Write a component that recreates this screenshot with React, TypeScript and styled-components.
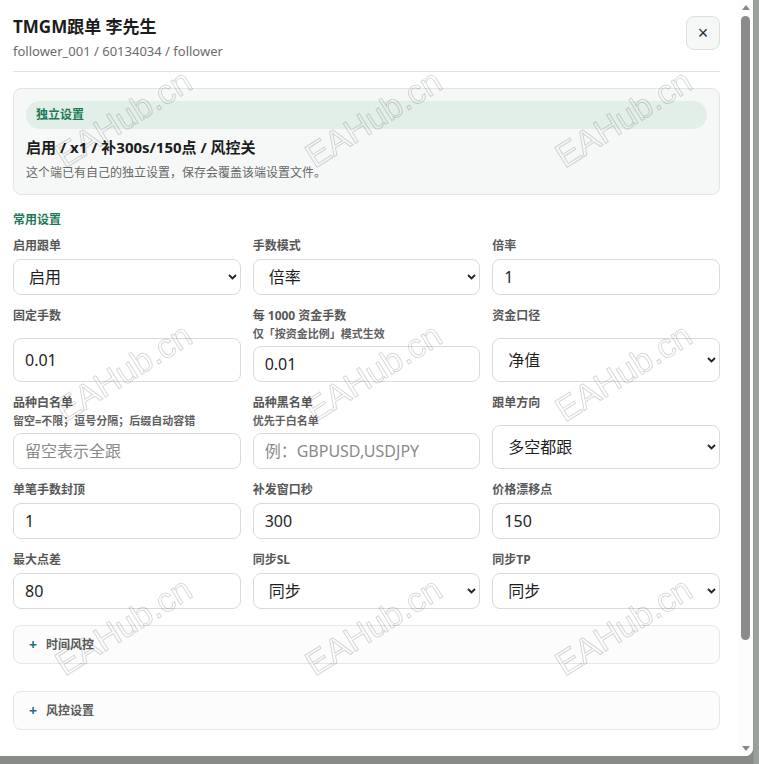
import styled, { createGlobalStyle } from 'styled-components';

const GlobalStyle = createGlobalStyle`
  html, body {
    margin: 0;
    padding: 0;
  }
  body {
    background: #878c88;
    font-family: 'Noto Sans', 'Noto Sans CJK SC', sans-serif;
    color: #1f1f1f;
  }
`;

const Page = styled.div`
  width: 759px;
  height: 764px;
  overflow: hidden;
  background: linear-gradient(90deg, #878c88 753px, #9aa09c 754px);
`;

const Modal = styled.div`
  width: 753px;
  height: 756px;
  display: flex;
  background: #fff;
  border-radius: 0 0 8px 0;
  overflow: hidden;
`;

const Body = styled.div`
  flex: 1;
  min-width: 0;
  overflow: hidden;
  padding: 16px 18px 0 13px;
`;

/* modal's own scroll rail */
const Rail = styled.div`
  width: 15px;
  display: flex;
  flex-direction: column;
  background: #fdfdfd;
`;

const RailArrow = styled.div`
  height: 15px;
  display: flex;
  align-items: center;
  justify-content: center;
`;

const RailTrack = styled.div`
  flex: 1;
  padding: 1px 3px 0 3px;
`;

const RailThumb = styled.div`
  height: 624px;
  border-radius: 5px;
  background: #8b8b8b;
`;

const Header = styled.header`
  display: flex;
  justify-content: space-between;
  align-items: flex-start;
  padding-bottom: 11px;
  border-bottom: 1px solid #e1e4e2;
`;

const Title = styled.h2`
  margin: 0;
  font-size: 17px;
  line-height: 22px;
  font-weight: 700;
  color: #1c1c1c;
`;

const Subtitle = styled.div`
  margin-top: 4px;
  font-size: 13px;
  line-height: 18px;
  color: #6b6b6b;
`;

const CloseButton = styled.button`
  width: 34px;
  height: 34px;
  padding: 0;
  border: 1px solid #d9e1dc;
  border-radius: 8px;
  background: #f5f8f6;
  color: #1d2a38;
  font-size: 18px;
  line-height: 1;
  font-family: 'Liberation Sans', sans-serif;
  cursor: pointer;
`;

const InfoCard = styled.section`
  margin-top: 16px;
  padding: 12px;
  border: 1px solid #e1e7e3;
  border-radius: 8px;
  background: #f6f8f7;
`;

const Pill = styled.div`
  height: 28px;
  padding: 0 10px;
  border-radius: 14px;
  background: #e2efe8;
  color: #1d7856;
  font-size: 12px;
  line-height: 28px;
  font-weight: 700;
`;

const Summary = styled.div`
  margin-top: 7px;
  font-size: 15px;
  line-height: 22px;
  font-weight: 700;
  color: #1c1c1c;
`;

const Note = styled.div`
  margin-top: 6px;
  font-size: 12px;
  line-height: 18px;
  color: #676767;
`;

const GroupTitle = styled.div`
  margin-top: 17px;
  font-size: 12px;
  line-height: 16px;
  font-weight: 700;
  color: #1d7856;
`;

const Grid = styled.div`
  margin-top: 10px;
  display: grid;
  grid-template-columns: repeat(3, 1fr);
  column-gap: 12px;
  row-gap: 13px;
`;

const Field = styled.div`
  display: grid;
  row-gap: 5px;
`;

const LabelBlock = styled.div`
  display: flex;
  flex-direction: column;
`;

const Label = styled.label`
  font-size: 12px;
  line-height: 16px;
  font-weight: 700;
  color: #575757;
`;

const Hint = styled.span`
  margin-top: 2px;
  font-size: 11px;
  line-height: 15px;
  font-weight: 700;
  color: #5f5f5f;
`;

const Input = styled.input`
  align-self: stretch;
  min-height: 36px;
  box-sizing: border-box;
  width: 100%;
  padding: 0 11px;
  border: 1px solid #d6dcd9;
  border-radius: 8px;
  background: #fff;
  font-family: inherit;
  font-size: 16px;
  color: #1f1f1f;
  outline: none;

  &::placeholder {
    color: #8a8a8a;
  }
`;

const SelectWrap = styled.div`
  position: relative;
  display: flex;
  min-height: 36px;
`;

const Select = styled.select`
  flex: 1;
  appearance: none;
  box-sizing: border-box;
  width: 100%;
  padding: 0 28px 0 15px;
  border: 1px solid #d6dcd9;
  border-radius: 8px;
  background: #fff;
  font-family: inherit;
  font-size: 16px;
  color: #1f1f1f;
  outline: none;
`;

const Chevron = styled.svg`
  position: absolute;
  right: 4px;
  top: 50%;
  margin-top: -3px;
  pointer-events: none;
`;

const Collapse = styled.div<{ $gap: number }>`
  margin-top: ${(p) => p.$gap}px;
  height: 39px;
  box-sizing: border-box;
  display: flex;
  align-items: center;
  gap: 9px;
  padding: 0 15px;
  border: 1px solid #e4e8e6;
  border-radius: 8px;
  background: #fbfcfb;
  cursor: pointer;
`;

const Plus = styled.span`
  font-size: 14px;
  line-height: 1;
  font-weight: 700;
  color: #1d6f8a;
`;

const CollapseTitle = styled.span`
  font-size: 12px;
  line-height: 16px;
  font-weight: 700;
  color: #5a5a5a;
`;

const Watermarks = styled.div`
  position: fixed;
  top: -9px;
  left: -1px;
  display: grid;
  grid-template-columns: repeat(3, 250px);
  grid-template-rows: repeat(3, 254px);
  height: 762px;
  overflow: hidden;
  pointer-events: none;
  z-index: 10;
`;

const Mark = styled.span`
  place-self: center;
  transform: rotate(-32deg);
  font-family: 'Liberation Sans', sans-serif;
  font-size: 34px;
  color: transparent;
  -webkit-text-stroke: 1px rgba(0, 0, 0, 0.16);
  white-space: nowrap;
`;

type FieldDef =
  | { kind: 'select'; label: string; hint?: string; value: string; options: string[] }
  | { kind: 'input'; label: string; hint?: string; value?: string; placeholder?: string };

const fields: FieldDef[] = [
  { kind: 'select', label: '启用跟单', value: '启用', options: ['启用', '停用'] },
  { kind: 'select', label: '手数模式', value: '倍率', options: ['倍率', '固定手数', '按资金比例'] },
  { kind: 'input', label: '倍率', value: '1' },
  { kind: 'input', label: '固定手数', value: '0.01' },
  { kind: 'input', label: '每 1000 资金手数', hint: '仅「按资金比例」模式生效', value: '0.01' },
  { kind: 'select', label: '资金口径', value: '净值', options: ['净值', '余额'] },
  { kind: 'input', label: '品种白名单', hint: '留空=不限；逗号分隔；后缀自动容错', placeholder: '留空表示全跟' },
  { kind: 'input', label: '品种黑名单', hint: '优先于白名单', placeholder: '例：GBPUSD,USDJPY' },
  { kind: 'select', label: '跟单方向', value: '多空都跟', options: ['多空都跟', '只跟多', '只跟空', '反向跟单'] },
  { kind: 'input', label: '单笔手数封顶', value: '1' },
  { kind: 'input', label: '补发窗口秒', value: '300' },
  { kind: 'input', label: '价格漂移点', value: '150' },
  { kind: 'input', label: '最大点差', value: '80' },
  { kind: 'select', label: '同步SL', value: '同步', options: ['同步', '不同步'] },
  { kind: 'select', label: '同步TP', value: '同步', options: ['同步', '不同步'] },
];

function FormField({ field }: { field: FieldDef }) {
  return (
    <Field>
      <LabelBlock>
        <Label>{field.label}</Label>
        {field.hint && <Hint>{field.hint}</Hint>}
      </LabelBlock>
      {field.kind === 'select' ? (
        <SelectWrap>
          <Select defaultValue={field.value}>
            {field.options.map((o) => (
              <option key={o}>{o}</option>
            ))}
          </Select>
          <Chevron width="9" height="6" viewBox="0 0 9 6">
            <path d="M1 1l3.5 3.5L8 1" stroke="#222" strokeWidth="1.8" fill="none" />
          </Chevron>
        </SelectWrap>
      ) : (
        <Input defaultValue={field.value} placeholder={field.placeholder} />
      )}
    </Field>
  );
}

export default function App() {
  return (
    <>
      <GlobalStyle />
      <Page>
        <Modal>
          <Body>
            <Header>
              <div>
                <Title>TMGM跟单 李先生</Title>
                <Subtitle>follower_001 / 60134034 / follower</Subtitle>
              </div>
              <CloseButton>×</CloseButton>
            </Header>

            <InfoCard>
              <Pill>独立设置</Pill>
              <Summary>启用 / x1 / 补300s/150点 / 风控关</Summary>
              <Note>这个端已有自己的独立设置，保存会覆盖该端设置文件。</Note>
            </InfoCard>

            <GroupTitle>常用设置</GroupTitle>
            <Grid>
              {fields.map((f) => (
                <FormField key={f.label} field={f} />
              ))}
            </Grid>

            <Collapse $gap={16}>
              <Plus>+</Plus>
              <CollapseTitle>时间风控</CollapseTitle>
            </Collapse>
            <Collapse $gap={27}>
              <Plus>+</Plus>
              <CollapseTitle>风控设置</CollapseTitle>
            </Collapse>
          </Body>

          <Rail>
            <RailArrow>
              <svg width="8" height="5" viewBox="0 0 8 5">
                <path d="M0 5h8L4 0z" fill="#888" />
              </svg>
            </RailArrow>
            <RailTrack>
              <RailThumb />
            </RailTrack>
            <RailArrow>
              <svg width="8" height="5" viewBox="0 0 8 5">
                <path d="M0 0h8L4 5z" fill="#888" />
              </svg>
            </RailArrow>
          </Rail>
        </Modal>
      </Page>
      <Watermarks>
        {Array.from({ length: 9 }).map((_, i) => (
          <Mark key={i}>EAHub.cn</Mark>
        ))}
      </Watermarks>
    </>
  );
}
